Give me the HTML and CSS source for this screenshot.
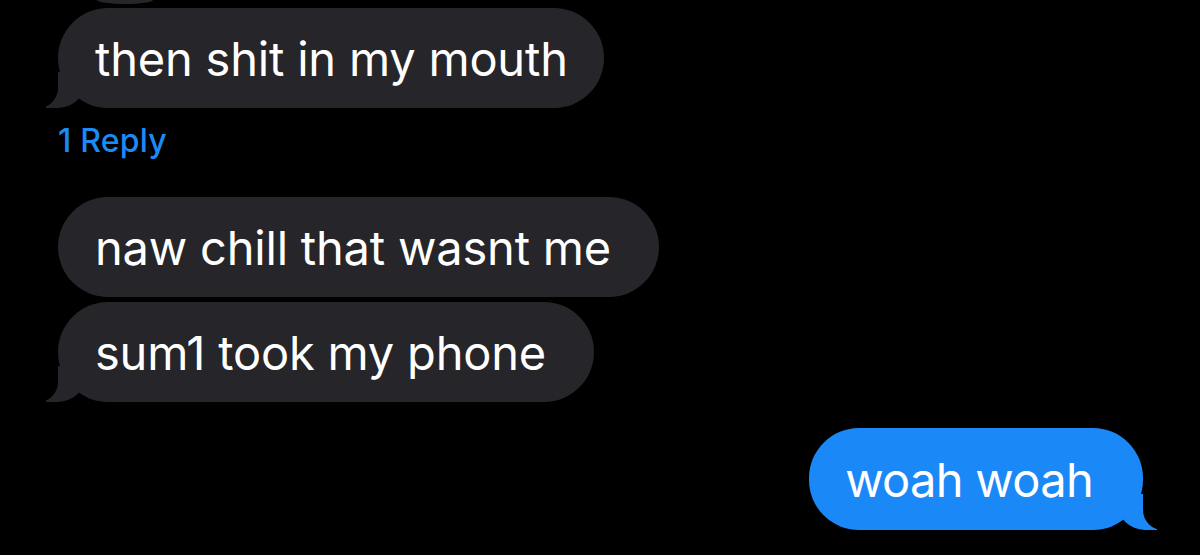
FILE: index.html
```html
<!DOCTYPE html>
<html>
<head>
<meta charset="utf-8">
<link rel="stylesheet" href="styles.css">
</head>
<body>
<div class="chat">
  <div class="prev"></div>
  <div class="bubble in tail pad-short">then shit in my mouth</div>
  <div class="reply">1 Reply</div>
  <div class="bubble in gap-lg">naw chill that wasnt me</div>
  <div class="bubble in tail gap-sm">sum1 took my phone</div>
  <div class="bubble out tail gap-md">woah woah</div>
</div>
</body>
</html>
```
FILE: styles.css
```css
html, body {
  margin: 0;
  padding: 0;
  background: #000;
  height: 555px;
  overflow: hidden;
}
.chat {
  display: flex;
  flex-direction: column;
  align-items: flex-start;
  padding: 0 57px 0 58px;
  font-family: "Inter", "Roboto", "Liberation Sans", sans-serif;
}
.prev {
  width: 56px;
  height: 4px;
  margin-left: 39px;
  background: #262529;
  border-radius: 0 0 28px 28px / 0 0 4px 4px;
}
.bubble {
  position: relative;
  height: 100px;
  display: flex;
  align-items: center;
  padding: 0 48px 0 37px;
  border-radius: 50px;
  font-size: 47px;
  color: #fff;
  box-sizing: border-box;
  white-space: nowrap;
  letter-spacing: -0.2px;
}
.pad-short { padding-right: 36px; }
.in {
  background: #262529;
  margin-top: 4px;
}
.out {
  background: #1b88f7;
  align-self: flex-end;
  height: 102px;
  padding-left: 36px;
  padding-right: 50px;
  letter-spacing: -0.7px;
}
.gap-sm { margin-top: 5px; }
.gap-md { margin-top: 26px; }
.gap-lg { margin-top: 38px; }
.reply {
  margin-top: 15px;
  height: 36px;
  line-height: 36px;
  font-size: 32px;
  font-weight: 500;
  letter-spacing: 0.2px;
  color: #1c8bf4;
}
.in.tail::before {
  content: "";
  position: absolute;
  bottom: 0;
  left: -12px;
  width: 40px;
  height: 36px;
  background: #262529;
  border-bottom-right-radius: 28px;
}
.in.tail::after {
  content: "";
  position: absolute;
  bottom: 0;
  left: -20px;
  width: 20px;
  height: 36px;
  background: #000;
  border-bottom-right-radius: 20px;
}
.out.tail::before {
  content: "";
  position: absolute;
  bottom: 0;
  right: -14px;
  width: 40px;
  height: 36px;
  background: #1b88f7;
  border-bottom-left-radius: 28px;
}
.out.tail::after {
  content: "";
  position: absolute;
  bottom: 0;
  right: -20px;
  width: 20px;
  height: 36px;
  background: #000;
  border-bottom-left-radius: 20px;
}
```
